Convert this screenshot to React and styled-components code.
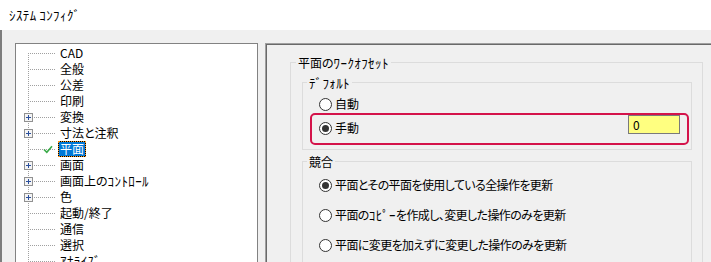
import React from "react";
import styled, { createGlobalStyle, css } from "styled-components";

const GlobalStyle = createGlobalStyle`
  html, body {
    margin: 0;
    padding: 0;
    background: #f0f0f0;
  }
  body {
    font-family: "Noto Sans CJK JP", "Noto Sans", sans-serif;
    font-size: 12px;
    color: #000;
    font-feature-settings: "palt";
  }
`;

const Window = styled.div`
  width: 711px;
  height: 262px;
  overflow: hidden;
  display: flex;
  flex-direction: column;
  background: #f0f0f0;
`;

const TitleBar = styled.div`
  height: 30px;
  flex: none;
  background: #fff;
  display: flex;
  align-items: center;
  padding-left: 9px;
  line-height: 16px;
`;

const Body = styled.div`
  flex: 1;
  display: flex;
  gap: 7px;
  padding: 13px 0 0 13px;
  border-left: 2px solid #7d7d7d;
  min-height: 0;
`;

const TreeBox = styled.div`
  width: 241px;
  flex: none;
  height: 400px;
  background: #fff;
  border: 1px solid #828282;
  padding-top: 1px;
`;

const dotsX = css`
  background-image: linear-gradient(to right, #a0a0a0 50%, transparent 50%);
  background-size: 2px 1px;
  background-repeat: repeat-x;
`;

const dotsY = css`
  background-image: linear-gradient(to bottom, #a0a0a0 50%, transparent 50%);
  background-size: 1px 2px;
  background-repeat: repeat-y;
`;

const TreeRow = styled.div`
  position: relative;
  height: 16px;
  padding-left: 42px;
  display: flex;
  align-items: center;

  &::before {
    content: "";
    position: absolute;
    left: 12px;
    width: 1px;
    top: ${(p) => (p.$first ? "8px" : "0")};
    bottom: 0;
    ${dotsY}
  }

  &::after {
    content: "";
    position: absolute;
    left: 12px;
    top: 8px;
    width: 28px;
    height: 1px;
    ${dotsX}
  }
`;

const Expander = styled.svg`
  position: absolute;
  left: 8px;
  top: 4px;
  z-index: 1;
`;

const Check = styled.svg`
  position: absolute;
  left: 27px;
  top: 4px;
  z-index: 1;
`;

const TreeLabel = styled.span`
  height: 16px;
  line-height: 14px;
  padding: 0 1px;
  border: 1px solid transparent;
  box-sizing: border-box;
  white-space: nowrap;
  ${(p) =>
    p.$selected &&
    css`
      color: #fff;
      border: 1px dotted #ff9a1f;
      background: linear-gradient(#0078d7, #0078d7) padding-box, #000 border-box;
    `}
`;

const Panel = styled.div`
  flex: 1;
  height: 400px;
  border-top: 1px solid #a0a0a0;
  border-left: 1px solid #a0a0a0;
  box-shadow: inset 1px 1px 0 #696969;
  padding: 18px 8px 0 24px;
`;

const Group = styled.div`
  border: 1px solid #dcdcdc;
  margin-top: ${(p) => p.$mt || 0}px;
  padding: 0 ${(p) => p.$pr}px ${(p) => p.$pb || 0}px ${(p) => p.$pl}px;
  display: flex;
  flex-direction: column;
  align-items: stretch;
`;

const Legend = styled.div`
  align-self: flex-start;
  margin: -7px 0 0 ${(p) => p.$ml}px;
  padding: 0 2px;
  height: 14px;
  line-height: 14px;
  background: #f0f0f0;
  white-space: nowrap;
`;

const RadioRow = styled.label`
  display: flex;
  align-items: center;
  gap: 3px;
  height: 16px;
  line-height: 16px;
  margin-top: ${(p) => p.$mt || 0}px;
  white-space: nowrap;
  letter-spacing: ${(p) => (p.$tight ? "-0.6px" : "0")};
`;

const Radio = styled.span`
  width: 13px;
  height: 13px;
  flex: none;
  box-sizing: border-box;
  border: 1px solid #333;
  border-radius: 50%;
  background: #fff;
  position: relative;
  ${(p) =>
    p.$checked &&
    css`
      &::after {
        content: "";
        position: absolute;
        left: 2px;
        top: 2px;
        width: 7px;
        height: 7px;
        border-radius: 50%;
        background: #333;
      }
    `}
`;

const Highlight = styled.div`
  margin: 1px 0 0 -9px;
  height: 28px;
  border: 2px solid #d4134a;
  border-radius: 5px;
  display: flex;
  justify-content: space-between;
  align-items: flex-start;
  padding: 0 7px 0 7px;
`;

const ValueInput = styled.input`
  width: 52px;
  height: 19px;
  box-sizing: border-box;
  border: 1px solid #7a7a7a;
  background: #ffff80;
  font: inherit;
  font-size: 12px;
  padding: 0 0 0 4px;
  outline: none;
  color: #000;
`;

// half-width katakana runs look tiny in Noto, bump them a bit
const Hw = styled.span`
  font-size: 13px;
  letter-spacing: 0.4px;
`;

const Txt = ({ children }) => (
  <span>
    {children.split(/([\uFF61-\uFF9F]+)/).map((part, i) =>
      /[\uFF61-\uFF9F]/.test(part) ? <Hw key={i}>{part}</Hw> : part
    )}
  </span>
);

const PlusIcon = () => (
  <Expander width="9" height="9" viewBox="0 0 9 9">
    <rect x="0.5" y="0.5" width="8" height="8" fill="#f4f4f4" stroke="#919191" />
    <path d="M2 4.5h5M4.5 2v5" stroke="#2b4f9c" strokeWidth="1" />
  </Expander>
);

const CheckIcon = () => (
  <Check width="10" height="9" viewBox="0 0 10 9">
    <path d="M1 4.5 L3.8 7.3 L9 1.2" fill="none" stroke="#3aaa48" strokeWidth="1.6" />
  </Check>
);

const treeItems = [
  { label: "CAD" },
  { label: "全般" },
  { label: "公差" },
  { label: "印刷" },
  { label: "変換", plus: true },
  { label: "寸法と注釈", plus: true },
  { label: "平面", check: true, selected: true },
  { label: "画面", plus: true },
  { label: "画面上のｺﾝﾄﾛｰﾙ", plus: true },
  { label: "色", plus: true },
  { label: "起動/終了" },
  { label: "通信" },
  { label: "選択" },
  { label: "ｱﾅﾗｲｽﾞ" },
  { label: "" },
];

const conflictOptions = [
  { label: "平面とその平面を使用している全操作を更新", checked: true },
  { label: "平面のｺﾋﾟｰを作成し、変更した操作のみを更新" },
  { label: "平面に変更を加えずに変更した操作のみを更新" },
];

export default function App() {
  return (
    <Window>
      <GlobalStyle />
      <TitleBar>
        <Txt>ｼｽﾃﾑ ｺﾝﾌｨｸﾞ</Txt>
      </TitleBar>
      <Body>
        <TreeBox>
          {treeItems.map((item, i) => (
            <TreeRow key={i} $first={i === 0}>
              {item.plus && <PlusIcon />}
              {item.check && <CheckIcon />}
              <TreeLabel $selected={item.selected}>
                <Txt>{item.label}</Txt>
              </TreeLabel>
            </TreeRow>
          ))}
        </TreeBox>
        <Panel>
          <Group $pl={11} $pr={10}>
            <Legend $ml={-6}>
              <Txt>平面のﾜｰｸｵﾌｾｯﾄ</Txt>
            </Legend>
            <Group $mt={12} $pl={16} $pr={2} $pb={4}>
              <Legend $ml={-12}>
                <Txt>ﾃﾞﾌｫﾙﾄ</Txt>
              </Legend>
              <RadioRow $mt={6}>
                <Radio />
                自動
              </RadioRow>
              <Highlight>
                <RadioRow $mt={5}>
                  <Radio $checked />
                  手動
                </RadioRow>
                <ValueInput defaultValue="0" />
              </Highlight>
            </Group>
            <Group $mt={11} $pl={16} $pr={2} $pb={20}>
              <Legend $ml={-12}>競合</Legend>
              {conflictOptions.map((o, i) => (
                <RadioRow key={i} $mt={i === 0 ? 8 : 14} $tight>
                  <Radio $checked={o.checked} />
                  <Txt>{o.label}</Txt>
                </RadioRow>
              ))}
            </Group>
          </Group>
        </Panel>
      </Body>
    </Window>
  );
}
